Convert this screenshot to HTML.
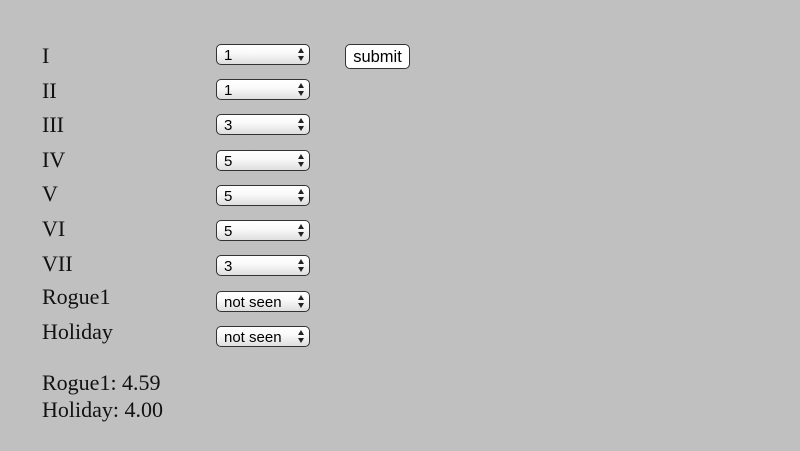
<!DOCTYPE html>
<html><head><style>
body{margin:0;width:800px;height:451px;background:#c0c0c0;position:relative;overflow:hidden;font-family:"Liberation Serif",serif;}
.l{position:absolute;left:42px;font-size:22px;line-height:22px;color:#111;white-space:nowrap}
.s{position:absolute;left:216px;width:92px;height:19px;border:1.5px solid #333;border-radius:5px;background:linear-gradient(#fff,#fafafa 40%,#dedede);font-family:"Liberation Sans",sans-serif;font-size:15px;line-height:19px;color:#000;box-sizing:content-box}
.s span{position:absolute;left:7px;top:1px}
.s i{position:absolute;right:5px;top:3px;width:0;height:0;border-left:3.5px solid transparent;border-right:3.5px solid transparent;border-bottom:5px solid #222}
.s b{position:absolute;right:5px;top:11px;width:0;height:0;border-left:3.5px solid transparent;border-right:3.5px solid transparent;border-top:5px solid #222}
.btn{position:absolute;left:345px;top:44px;width:63px;height:23px;border:1.5px solid #333;border-radius:5px;background:#fff;font-family:"Liberation Sans",sans-serif;font-size:16.5px;line-height:25px;text-align:center}
</style></head><body>
<div class="l" style="top:45px">I</div>
<div class="l" style="top:80px">II</div>
<div class="l" style="top:114px">III</div>
<div class="l" style="top:149px">IV</div>
<div class="l" style="top:183px">V</div>
<div class="l" style="top:218px">VI</div>
<div class="l" style="top:253px">VII</div>
<div class="l" style="top:286px">Rogue1</div>
<div class="l" style="top:321px">Holiday</div>
<div class="l" style="top:372px">Rogue1: 4.59</div>
<div class="l" style="top:399px">Holiday: 4.00</div>

<div class="s" style="top:44px"><span>1</span><i></i><b></b></div>
<div class="s" style="top:79px"><span>1</span><i></i><b></b></div>
<div class="s" style="top:114px"><span>3</span><i></i><b></b></div>
<div class="s" style="top:150px"><span>5</span><i></i><b></b></div>
<div class="s" style="top:185px"><span>5</span><i></i><b></b></div>
<div class="s" style="top:220px"><span>5</span><i></i><b></b></div>
<div class="s" style="top:255px"><span>3</span><i></i><b></b></div>
<div class="s" style="top:291px"><span>not seen</span><i></i><b></b></div>
<div class="s" style="top:326px"><span>not seen</span><i></i><b></b></div>

<div class="btn">submit</div>
</body></html>
